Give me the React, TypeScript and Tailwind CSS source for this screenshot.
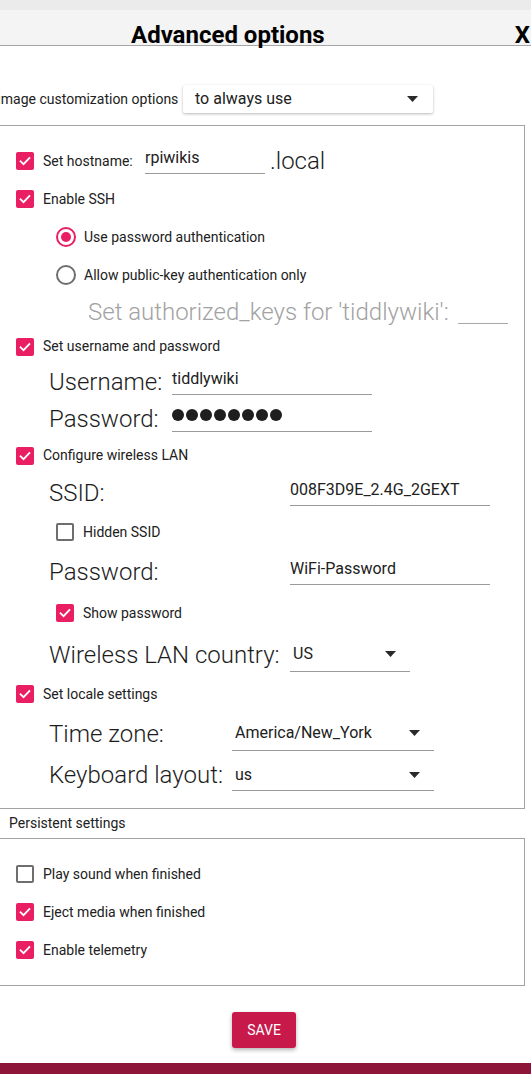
import React from 'react';

function CheckBox({ checked = true }: { checked?: boolean }) {
  if (!checked) {
    return <span className="w-[18px] h-[18px] shrink-0 rounded-[2px] border-2 border-[#6e6e6e] bg-white" />;
  }
  return (
    <span className="w-[18px] h-[18px] shrink-0 rounded-[2px] bg-[#e91e63] flex items-center justify-center">
      <svg width="14" height="14" viewBox="0 0 24 24" fill="none">
        <path d="M4.5 12.5l5 5L19.5 7" stroke="white" strokeWidth="3.2" strokeLinecap="square" />
      </svg>
    </span>
  );
}

function Radio({ checked }: { checked?: boolean }) {
  return (
    <span
      className={`w-[20px] h-[20px] shrink-0 rounded-full border-2 flex items-center justify-center ${
        checked ? 'border-[#e91e63]' : 'border-[#6e6e6e]'
      }`}
    >
      {checked && <span className="w-[10px] h-[10px] rounded-full bg-[#e91e63]" />}
    </span>
  );
}

function Arrow() {
  return (
    <svg width="11" height="6" viewBox="0 0 11 6">
      <path d="M0 0h11L5.5 6z" fill="#2a2a2a" />
    </svg>
  );
}

function TextField({ value, w }: { value: React.ReactNode; w: string }) {
  return (
    <div className={`${w} h-[26px] border-b border-[#9a9a9a] text-[16px] leading-[20px] text-[#212121]`}>
      {value}
    </div>
  );
}

function Select({ value, w, h = 'h-[34px]' }: { value: string; w: string; h?: string }) {
  return (
    <div className={`${w} ${h} border-b border-[#9a9a9a] flex items-center justify-between pl-[3px] pr-[14px] text-[16px] text-[#212121]`}>
      <span>{value}</span>
      <Arrow />
    </div>
  );
}

function CheckRow({ label, checked = true, h, indent = 'pl-[16px]' }: { label: string; checked?: boolean; h: string; indent?: string }) {
  return (
    <div className={`${h} ${indent} flex items-center gap-[9px]`}>
      <CheckBox checked={checked} />
      <span className="text-[14px] text-[#212121]">{label}</span>
    </div>
  );
}

const bigLabel = 'text-[24px] font-light text-[#1c1c1c] leading-none whitespace-nowrap';

export default function App() {
  return (
    <div className="w-[531px] h-[1074px] overflow-hidden bg-white font-['Roboto',sans-serif] text-[#212121]">
      {/* Title bar */}
      <div className="h-[10px] bg-[#ebebeb]" />
      <div className="h-[36px] bg-[#f4f4f4] border-b border-[#a6a6a6] flex items-start pt-[11px]">
        <h1 className="ml-[131px] text-[24px] font-bold leading-[28px] text-black">Advanced options</h1>
        <span className="ml-auto mr-[1px] text-[24px] font-bold leading-[28px] text-black">X</span>
      </div>

      {/* Customization scope */}
      <div className="mt-[39px] h-[28px] flex items-center">
        <span className="ml-[-3px] w-[186px] shrink-0 text-[14px] text-[#212121] whitespace-nowrap">Image customization options</span>
        <div className="w-[250px] h-[28px] rounded-[2px] bg-white shadow-[0_1px_3px_rgba(0,0,0,0.28)] flex items-center justify-between pl-[12px] pr-[15px]">
          <span className="text-[16px] text-[#212121]">to always use</span>
          <Arrow />
        </div>
      </div>

      {/* Main options box */}
      <div className="mt-[12px] -ml-[10px] mr-[6px] border border-[#a3a3a3]">
        <div className="ml-[9px] pt-[16px] pb-[12px]">
          <div className="h-[38px] pl-[16px] flex items-center">
            <CheckBox />
            <span className="ml-[9px] w-[102px] text-[14px] text-[#212121]">Set hostname:</span>
            <TextField value="rpiwikis" w="w-[120px]" />
            <span className={`${bigLabel} ml-[5px]`}>.local</span>
          </div>
          <CheckRow label="Enable SSH" h="h-[38px]" />
          <div className="h-[38px] pl-[56px] flex items-center gap-[8px]">
            <Radio checked />
            <span className="text-[14px] text-[#212121]">Use password authentication</span>
          </div>
          <div className="h-[38px] pl-[56px] flex items-center gap-[8px]">
            <Radio />
            <span className="text-[14px] text-[#212121]">Allow public-key authentication only</span>
          </div>
          <div className="h-[35px] pl-[88px] flex items-center">
            <span className="text-[24px] font-light text-[#a2a2a2] leading-none whitespace-nowrap">Set authorized_keys for 'tiddlywiki':</span>
            <div className="ml-[9px] w-[50px] h-[24px] shrink-0 border-b border-[#a8a8a8]" />
          </div>
          <CheckRow label="Set username and password" h="h-[35px]" />
          <div className="h-[36px] pl-[49px] flex items-center">
            <span className={`${bigLabel} w-[123px]`}>Username:</span>
            <TextField value="tiddlywiki" w="w-[200px]" />
          </div>
          <div className="h-[37px] pl-[49px] flex items-center">
            <span className={`${bigLabel} w-[123px]`}>Password:</span>
            <TextField
              w="w-[200px]"
              value={
                <div className="flex gap-[2px] pt-[3px]">
                  {[0, 1, 2, 3, 4, 5, 6, 7].map((i) => (
                    <span key={i} className="w-[12px] h-[12px] rounded-full bg-[#1e1e1e]" />
                  ))}
                </div>
              }
            />
          </div>
          <CheckRow label="Configure wireless LAN" h="h-[37px]" />
          <div className="h-[38px] pl-[49px] flex items-center">
            <span className={`${bigLabel} w-[241px]`}>SSID:</span>
            <TextField value="008F3D9E_2.4G_2GEXT" w="w-[200px]" />
          </div>
          <CheckRow label="Hidden SSID" checked={false} h="h-[40px]" indent="pl-[56px]" />
          <div className="h-[40px] pl-[49px] flex items-center">
            <span className={`${bigLabel} w-[241px]`}>Password:</span>
            <TextField value="WiFi-Password" w="w-[200px]" />
          </div>
          <CheckRow label="Show password" h="h-[42px]" indent="pl-[56px]" />
          <div className="h-[41px] pl-[49px] flex items-center">
            <span className={`${bigLabel} w-[241px]`}>Wireless LAN country:</span>
            <Select value="US" w="w-[120px]" />
          </div>
          <CheckRow label="Set locale settings" h="h-[38px]" />
          <div className="h-[41px] pl-[49px] flex items-center">
            <span className={`${bigLabel} w-[183px]`}>Time zone:</span>
            <Select value="America/New_York" w="w-[202px]" />
          </div>
          <div className="h-[42px] pl-[49px] flex items-center">
            <span className={`${bigLabel} w-[183px]`}>Keyboard layout:</span>
            <Select value="us" w="w-[202px]" h="h-[32px]" />
          </div>
        </div>
      </div>

      {/* Persistent settings */}
      <div className="h-[29px] flex items-center pl-[9px] text-[14px] text-[#212121]">Persistent settings</div>
      <div className="-ml-[10px] mr-[6px] border border-[#a3a3a3]">
        <div className="ml-[9px] pt-[16px] pb-[16px]">
          <CheckRow label="Play sound when finished" checked={false} h="h-[38px]" />
          <CheckRow label="Eject media when finished" h="h-[38px]" />
          <CheckRow label="Enable telemetry" h="h-[38px]" />
        </div>
      </div>

      <div className="mt-[26px] flex justify-center">
        <button className="ml-[-3px] w-[64px] h-[36px] rounded-[3px] bg-[#c8194b] text-white text-[14px] shadow-[0_2px_4px_rgba(0,0,0,0.3)]">
          SAVE
        </button>
      </div>
      <div className="mt-[15px] h-[12px] bg-[#8c1538]" />
    </div>
  );
}
